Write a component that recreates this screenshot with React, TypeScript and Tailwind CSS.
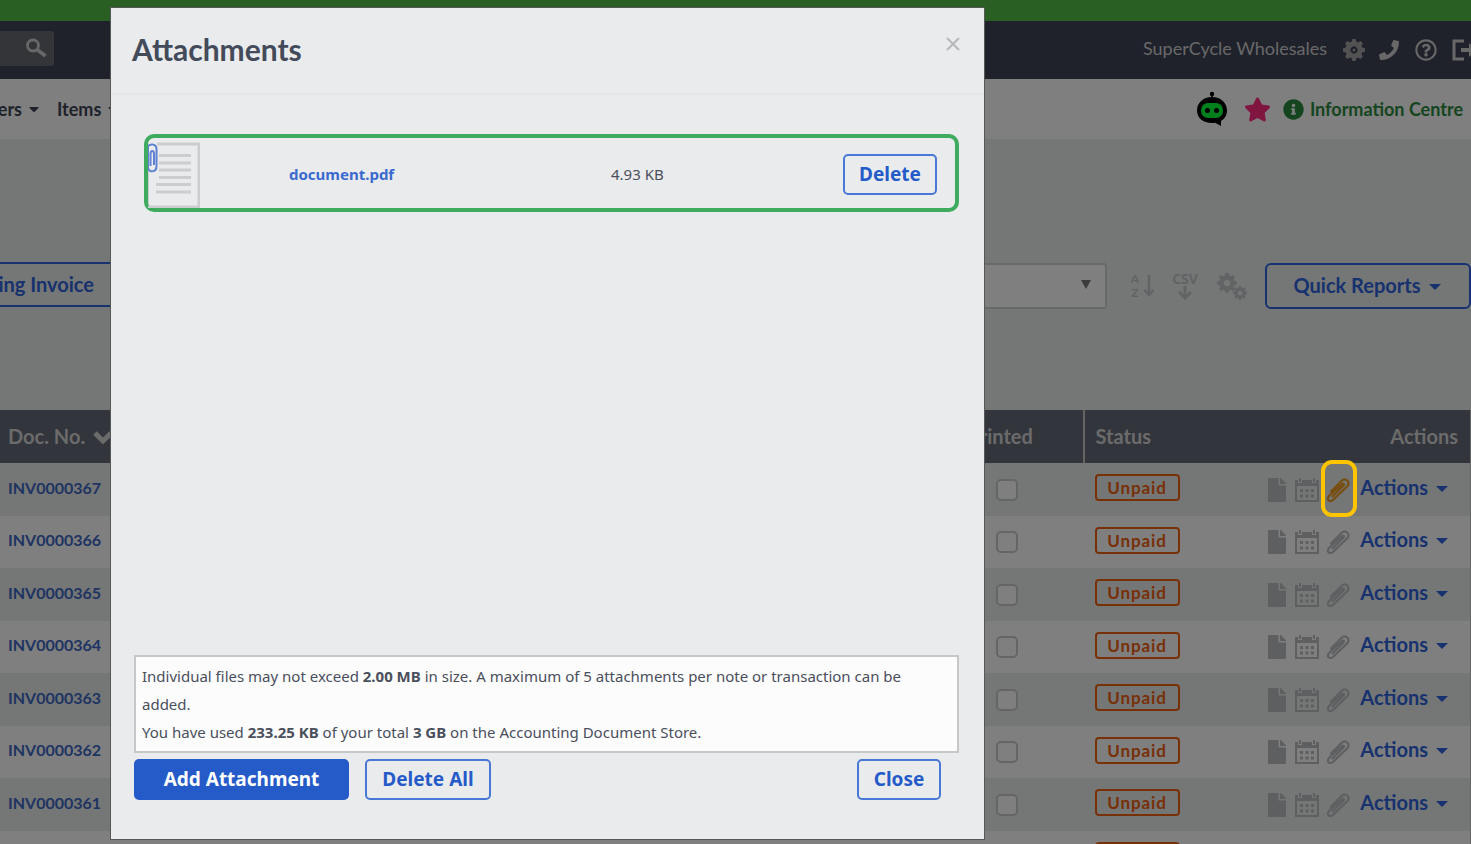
import React from 'react';
import { FaCaretDown, FaFile, FaInfoCircle, FaPhone, FaRegQuestionCircle, FaStar } from 'react-icons/fa';

const invoices = [
  { id: 'INV0000367', hasAttachment: true },
  { id: 'INV0000366', hasAttachment: false },
  { id: 'INV0000365', hasAttachment: false },
  { id: 'INV0000364', hasAttachment: false },
  { id: 'INV0000363', hasAttachment: false },
  { id: 'INV0000362', hasAttachment: false },
  { id: 'INV0000361', hasAttachment: false },
  { id: 'INV0000360', hasAttachment: false },
];

const teeth = [0, 45, 90, 135, 180, 225, 270, 315];

const Gear: React.FC<{ cx: number; cy: number; r: number }> = ({ cx, cy, r }) => (
  <g transform={`translate(${cx} ${cy}) scale(${r / 10})`}>
    <circle r="5.5" fill="none" stroke="currentColor" strokeWidth="4.4" />
    {teeth.map((angle) => (
      <path key={angle} d="M-2.4 -6.5 L-1.5 -10 H1.5 L2.4 -6.5Z" fill="currentColor" transform={`rotate(${angle})`} />
    ))}
  </g>
);

const SearchIcon = () => (
  <svg viewBox="0 0 22 20" className="h-5 w-[22px]" fill="none" stroke="currentColor">
    <circle cx="8" cy="7.5" r="5.5" strokeWidth="2.8" />
    <path d="M12 11.5 L20.5 18" strokeWidth="3.6" />
  </svg>
);

const LogoutIcon = () => (
  <svg viewBox="0 0 26 22" className="h-[22px] w-[26px] shrink-0" fill="currentColor">
    <path d="M12 2 H2 V20 H12" fill="none" stroke="currentColor" strokeWidth="3" />
    <path d="M9 9 H17 V4 L25 11 L17 18 V13 H9Z" />
  </svg>
);

const RobotIcon = () => (
  <svg viewBox="0 0 32 36" className="h-9 w-8">
    <circle cx="16" cy="3" r="2.2" />
    <path d="M15.2 4h1.6v3h-1.6z" />
    <path d="M16 6C7 6 1 12 1 19.500C1 27 7 32 16 32C17 32 18 32 19 31.800L25 35V30C29 27.500 31 24 31 19.500C31 12 25 6 16 6Z" />
    <rect x="5" y="12" width="22" height="15" rx="7" fill="#00ff38" />
    <circle cx="11.500" cy="19.500" r="2.500" />
    <circle cx="20.500" cy="19.500" r="2.500" />
  </svg>
);

const CalendarIcon = () => (
  <svg viewBox="0 0 24 24" className="h-6 w-6" fill="currentColor">
    <path d="M0 2H3V5H7V2H17V5H21V2H24V24H0ZM2 8V22H22V8Z" fillRule="evenodd" />
    <path d="M4 0h2v4H4zM18 0h2v4h-2z" />
    <path d="M5 11h3v3H5zM10.500 11h3v3h-3zM16 11h3v3h-3zM5 16.500h3v3H5zM10.500 16.500h3v3h-3zM16 16.500h3v3h-3z" />
  </svg>
);

const ClipIcon = () => (
  <svg viewBox="0 0 24 24" className="h-6 w-6" fill="none" stroke="currentColor" strokeWidth="2.2" strokeLinecap="round">
    <path d="M6.500 18.500L17.500 7.500C18.500 6.300 17.300 4.800 16 6L3.500 17.500C-.5 21.500 3.500 25 7.500 21.500L21 8.500C25 4 19.500 -1 15.500 3L5 13.500" />
  </svg>
);

const DocumentIcon = () => (
  <svg viewBox="0 0 52 66" className="h-[66px] w-[52px]" fill="none">
    <path d="M9 2H51V65H0" stroke="#cccdce" strokeWidth="3" />
    <path d="M0.500 28V62" stroke="#cccdce" />
    <path d="M11 13.500H43M11 21H43M11 28H43M11 35.500H43M8 42.500H43M8 50H43" stroke="#cccdce" strokeWidth="3" />
    <path d="M0 4C5 1 8.500 3 8.500 7V24C8.500 31 0 31 0 25M0 25V4M2.500 24V12C2.500 8 6 8 6 12V23" stroke="#5f82d3" strokeWidth="2" />
  </svg>
);

const outlineButton = 'h-[41px] rounded-[5px] border-2 border-[#4a78d6] text-[19px] font-bold text-[#255bc9]';

const TopBar = () => (
  <header>
    <div className="h-[21px] bg-[#54be48]" />
    <div className="flex h-[58px] items-center justify-between bg-[#3e4456] pb-1">
      <button aria-label="Search" className="flex h-[35px] w-[54px] items-center justify-end rounded-r-[3px] bg-[#666a72] pr-[7px] text-[#d0d0d0]">
        <SearchIcon />
      </button>
      <div className="-mr-[7px] flex items-center text-[#d0d0d0]">
        <span className="mr-4 text-lg">SuperCycle Wholesales</span>
        <button aria-label="Settings" className="mt-1 mr-[14px] text-[#a4a4a4]">
          <svg viewBox="0 0 22 22" className="size-[22px]"><Gear cx={11} cy={11} r={11} /><circle cx="11" cy="11" r="1.500" fill="currentColor" /></svg>
        </button>
        <button aria-label="Phone" className="mt-1 mr-4"><FaPhone size={20} /></button>
        <button aria-label="Help" className="mt-1 mr-[15px]"><FaRegQuestionCircle size={22} /></button>
        <button aria-label="Log out" className="mt-1"><LogoutIcon /></button>
      </div>
    </div>
    <nav className="flex h-[60px] items-center justify-between bg-white text-lg font-bold text-[#3e4456]">
      <div className="flex items-center">
        <div className="flex w-[22px] justify-end overflow-hidden"><a href="#">Customers</a></div>
        <FaCaretDown size={16} className="mr-[15px] ml-1" />
        <a href="#">Items</a>
        <FaCaretDown size={16} className="ml-1" />
      </div>
      <div className="flex items-center pr-2">
        <RobotIcon />
        <FaStar size={27} className="mr-3 ml-4 text-[#ff2a80]" />
        <a href="#" className="flex items-center gap-[6px] text-[#2b8a3e]">
          <FaInfoCircle size={21} />
          Information Centre
        </a>
      </div>
    </nav>
  </header>
);

const Toolbar = () => (
  <div className="flex h-[271px] items-start justify-between pt-[124px] text-[#c4c6ca]">
    <button className="-mt-px flex h-[45px] w-[130px] justify-end overflow-hidden border-y-2 border-[#2e64de] pr-9 text-xl leading-10 font-bold whitespace-nowrap text-[#2e64de]">
      Recurring Invoice
    </button>
    <div className="flex items-center">
      <div className="relative mr-6">
        <select aria-label="Filter" className="block h-[46px] w-[260px] appearance-none rounded-[3px] border-2 border-[#d0d2d2] bg-white">
          <option></option>
        </select>
        <svg viewBox="0 0 10 9" className="pointer-events-none absolute top-[17px] right-4 h-[9px] w-[10px]" fill="#777"><path d="M0 0H10L5 9Z" /></svg>
      </div>
      <button aria-label="Sort" className="mr-[18px] flex items-center gap-1">
        <span className="flex flex-col text-xs leading-[14px] font-bold">
          <span>A</span>
          <span>Z</span>
        </span>
        <svg viewBox="0 0 12 22" className="h-[22px] w-3" fill="none" stroke="currentColor" strokeWidth="2.5"><path d="M6 0V20M1.500 15L6 20L10.500 15" /></svg>
      </button>
      <button aria-label="Export CSV" className="mr-5 flex w-6 flex-col items-center">
        <span className="font-['Open_Sans',sans-serif] text-sm leading-[14px] font-bold">CSV</span>
        <svg viewBox="0 0 16 14" className="h-[14px] w-4" fill="none" stroke="currentColor" strokeWidth="3"><path d="M8 0V12M2 6L8 12L14 6" /></svg>
      </button>
      <button aria-label="Grid settings" className="mr-[18px]">
        <svg viewBox="0 0 30 28" className="h-7 w-[30px]"><Gear cx={10} cy={11} r={10} /><Gear cx={23} cy={21} r={7} /></svg>
      </button>
      <button className="flex h-[46px] w-[206px] items-center justify-center gap-2 rounded-[6px] border-2 border-[#2e64de] pr-[2px] pb-[2px] text-xl font-bold text-[#2e64de]">
        Quick Reports
        <svg viewBox="0 0 12 6" className="mt-1 h-[6px] w-3" fill="currentColor"><path d="M0 0H12L6 6Z" /></svg>
      </button>
    </div>
  </div>
);

const InvoiceTable = () => (
  <table className="w-full table-fixed border-r border-[#c8cccc] text-left">
    <colgroup>
      <col />
      <col className="w-[130px]" />
      <col className="w-[168px]" />
      <col className="w-[219px]" />
    </colgroup>
    <thead className="bg-[#646a76] text-xl text-[#d6d6d6]">
      <tr className="h-[53px]">
        <th className="pb-[2px] pl-2">
          <span className="flex items-center gap-2">
            Doc. No.
            <svg viewBox="0 0 20 14" className="mt-1 h-[14px] w-5" fill="none" stroke="currentColor" strokeWidth="5"><path d="M2 2L10 10L18 2" /></svg>
          </span>
        </th>
        <th className="border-r-2 border-[#c8c8c8] pb-[2px] pl-[14px]">Printed</th>
        <th className="pb-[2px] pl-[11px]">Status</th>
        <th className="pr-3 pb-[2px] text-right">Actions</th>
      </tr>
    </thead>
    <tbody>
      {invoices.map((invoice) => (
        <tr key={invoice.id} className="h-[53px] odd:bg-[#eaeeec] even:h-[52px] even:bg-white">
          <td className="pb-1 pl-2"><a href="#" className="text-base font-bold text-[#3e68c4]">{invoice.id}</a></td>
          <td className="pl-[42px]">
            <input type="checkbox" aria-label={`${invoice.id} printed`} className="block size-[22px] appearance-none rounded-[5px] border-2 border-[#c8cacc] bg-white" />
          </td>
          <td className="pb-1 pl-[11px]">
            <span className="block h-[27px] w-[85px] rounded-[4px] border-2 border-[#f0600f] text-center text-[17px] leading-[23px] font-bold tracking-wider text-[#f0600f]">Unpaid</span>
          </td>
          <td>
            <div className="flex items-center justify-end pr-[22px] text-[#bcbec2]">
              <FaFile size={24} className="mr-[9px] w-[18px]" />
              <span className="mr-[7px]"><CalendarIcon /></span>
              <span className={invoice.hasAttachment ? 'relative mr-[10px] text-[#f09a20]' : 'mr-[10px]'}>
                <ClipIcon />
                {invoice.hasAttachment && (
                  <span className="absolute -top-[18px] -left-[5px] z-50 h-[57px] w-9 rounded-[11px] border-4 border-[#ffc400]" />
                )}
              </span>
              <button className="flex items-center gap-2 pb-[6px] text-xl font-bold text-[#2e64de]">
                Actions
                <svg viewBox="0 0 12 6" className="mt-1 h-[6px] w-3" fill="currentColor"><path d="M0 0H12L6 6Z" /></svg>
              </button>
            </div>
          </td>
        </tr>
      ))}
    </tbody>
  </table>
);

const AttachmentsModal = () => (
  <div className="fixed inset-0 z-40 bg-black/50 pt-[7px] pb-1 pl-[110px]">
    <div role="dialog" aria-label="Attachments" className="flex h-full w-full max-w-[875px] flex-col border border-[#565858] bg-[#eaebed] font-['Noto_Sans',sans-serif] text-[#4a4f5c]">
      <div className="flex h-[87px] items-center justify-between border-b-2 border-[#e4e6e7] pr-6 pb-1 pl-[21px]">
        <h2 className="font-['Lato',sans-serif] text-3xl font-bold text-[#434a5a]">Attachments</h2>
        <button aria-label="Close dialog" className="pb-[10px] text-[#b7b8ba]">
          <svg viewBox="0 0 14 14" className="size-[14px]" fill="none" stroke="currentColor" strokeWidth="2"><path d="M1 1L13 13M13 1L1 13" /></svg>
        </button>
      </div>
      <div className="flex grow flex-col pt-[39px] pr-[25px] pl-[23px]">
        <div className="ml-[10px] flex h-[78px] items-center rounded-[10px] border-4 border-[#3fab5f] pt-[3px] pr-[18px]">
          <div className="w-[141px]"><DocumentIcon /></div>
          <a href="#" className="w-[322px] text-[15px] font-bold text-[#3a6ad0]">document.pdf</a>
          <span className="grow text-[15px]">4.93 KB</span>
          <button className={`${outlineButton} w-[94px]`}>Delete</button>
        </div>
        <div className="mt-auto border-2 border-[#c6c8c8] bg-[#fcfcfc] px-[6px] py-[5px] text-[15px] leading-7">
          <p>Individual files may not exceed <b>2.00 MB</b> in size. A maximum of 5 attachments per note or transaction can be added.</p>
          <p>You have used <b>233.25 KB</b> of your total <b>3 GB</b> on the Accounting Document Store.</p>
        </div>
        <div className="mt-[6px] mb-[39px] flex pr-[18px]">
          <button className="h-[41px] w-[215px] rounded-[5px] bg-[#255bc9] text-[19px] font-bold text-white">Add Attachment</button>
          <button className={`${outlineButton} ml-4 w-[126px]`}>Delete All</button>
          <button className={`${outlineButton} ml-auto w-[84px]`}>Close</button>
        </div>
      </div>
    </div>
  </div>
);

export default function App() {
  return (
    <div className="h-screen overflow-hidden bg-[#eaeeec] font-['Lato',sans-serif]">
      <TopBar />
      <Toolbar />
      <InvoiceTable />
      <AttachmentsModal />
    </div>
  );
}
